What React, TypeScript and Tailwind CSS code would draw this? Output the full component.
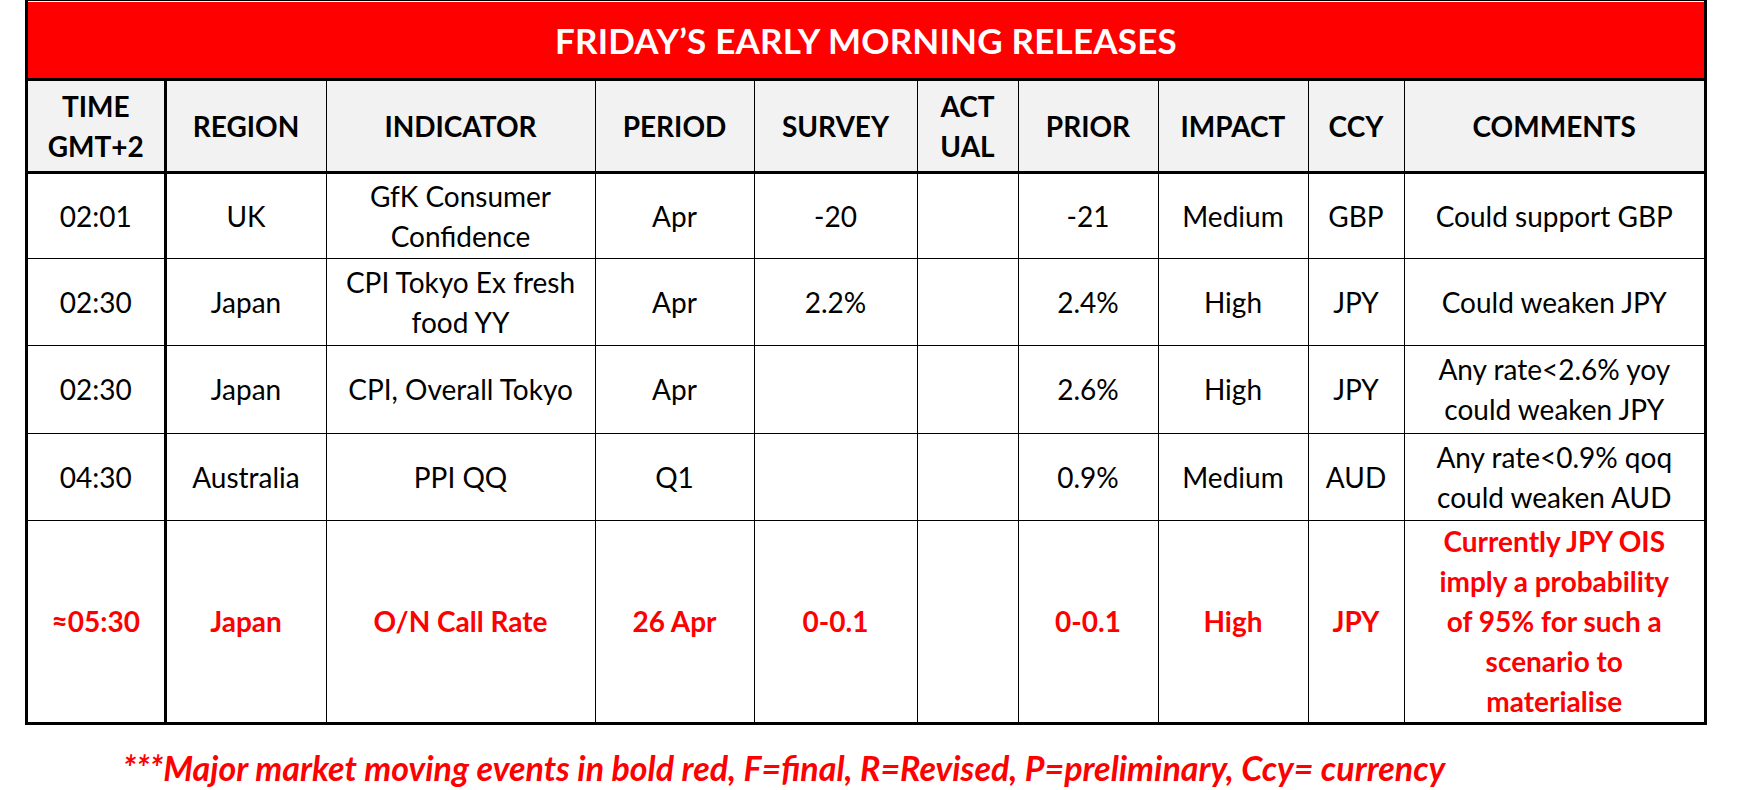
import React from 'react';

interface Release {
  time: string;
  region: string;
  indicator: string[];
  period: string;
  survey: string;
  actual: string;
  prior: string;
  impact: string;
  ccy: string;
  comments: string[];
  major?: boolean;
}

const releases: Release[] = [
  { time: '02:01', region: 'UK', indicator: ['GfK Consumer', 'Confidence'], period: 'Apr', survey: '-20', actual: '', prior: '-21', impact: 'Medium', ccy: 'GBP', comments: ['Could support GBP'] },
  { time: '02:30', region: 'Japan', indicator: ['CPI Tokyo Ex fresh', 'food YY'], period: 'Apr', survey: '2.2%', actual: '', prior: '2.4%', impact: 'High', ccy: 'JPY', comments: ['Could weaken JPY'] },
  { time: '02:30', region: 'Japan', indicator: ['CPI, Overall Tokyo'], period: 'Apr', survey: '', actual: '', prior: '2.6%', impact: 'High', ccy: 'JPY', comments: ['Any rate<2.6% yoy', 'could weaken JPY'] },
  { time: '04:30', region: 'Australia', indicator: ['PPI QQ'], period: 'Q1', survey: '', actual: '', prior: '0.9%', impact: 'Medium', ccy: 'AUD', comments: ['Any rate<0.9% qoq', 'could weaken AUD'] },
  {
    time: '≈05:30', region: 'Japan', indicator: ['O/N Call Rate'], period: '26 Apr', survey: '0-0.1', actual: '', prior: '0-0.1', impact: 'High', ccy: 'JPY',
    comments: ['Currently JPY OIS', 'imply a probability', 'of 95% for such a', 'scenario to', 'materialise'],
    major: true,
  },
];

const rowHeights = ['h-[86px]', 'h-[87px]', 'h-[88px]', 'h-[87px]', 'h-[202px]'];

function Lines({ lines }: { lines: string[] }) {
  return (
    <>
      {lines.map((l, i) => (
        <React.Fragment key={i}>
          {i > 0 && <br />}
          {l}
        </React.Fragment>
      ))}
    </>
  );
}

export default function App() {
  return (
    <div className="w-[1737px] h-[790px] bg-white font-['Lato',sans-serif] text-black overflow-hidden">
      <div className="ml-[25px] w-[1682px] border-x-[3px] border-t border-b-[3px] border-black">
        {/* Title bar */}
        <div className="mt-px h-[79px] bg-[#ff0000] border-b-[3px] border-black flex items-center justify-center">
          <span className="text-white font-bold text-[35px] tracking-[0.2px]">FRIDAY’S EARLY MORNING RELEASES</span>
        </div>

        <table className="w-full table-fixed border-collapse text-center text-[28px] leading-[40px]">
          <colgroup>
            <col className="w-[137px]" />
            <col className="w-[161px]" />
            <col className="w-[269px]" />
            <col className="w-[159px]" />
            <col className="w-[163px]" />
            <col className="w-[101px]" />
            <col className="w-[140px]" />
            <col className="w-[150px]" />
            <col className="w-[96px]" />
            <col className="w-[300px]" />
          </colgroup>
          <thead>
            <tr className="h-[91px] bg-[#f2f2f2] font-bold">
              <th className="border-r-[3px] border-b-[3px] border-black">TIME<br />GMT+2</th>
              <th className="border-r border-b-[3px] border-black">REGION</th>
              <th className="border-r border-b-[3px] border-black">INDICATOR</th>
              <th className="border-r border-b-[3px] border-black">PERIOD</th>
              <th className="border-r border-b-[3px] border-black">SURVEY</th>
              <th className="border-r border-b-[3px] border-black">ACT<br />UAL</th>
              <th className="border-r border-b-[3px] border-black">PRIOR</th>
              <th className="border-r border-b-[3px] border-black">IMPACT</th>
              <th className="border-r border-b-[3px] border-black">CCY</th>
              <th className="border-b-[3px] border-black">COMMENTS</th>
            </tr>
          </thead>
          <tbody>
            {releases.map((r, i) => {
              const last = i === releases.length - 1;
              const cell = `border-r border-black ${last ? '' : 'border-b'}`;
              return (
                <tr key={i} className={`${rowHeights[i]} ${r.major ? 'text-[#ff0000] font-bold' : ''}`}>
                  <td className={`border-r-[3px] border-black ${last ? '' : 'border-b'}`}>{r.time}</td>
                  <td className={cell}>{r.region}</td>
                  <td className={cell}><Lines lines={r.indicator} /></td>
                  <td className={cell}>{r.period}</td>
                  <td className={cell}>{r.survey}</td>
                  <td className={cell}>{r.actual}</td>
                  <td className={cell}>{r.prior}</td>
                  <td className={cell}>{r.impact}</td>
                  <td className={cell}>{r.ccy}</td>
                  <td className={`border-black ${last ? '' : 'border-b'}`}><Lines lines={r.comments} /></td>
                </tr>
              );
            })}
          </tbody>
        </table>
      </div>

      {/* Footnote */}
      <div className="w-[1568px] mt-[23px] text-center text-[#ff0000] font-bold italic text-[34px] leading-[40px]">
        ***Major market moving events in bold red, F=final, R=Revised, P=preliminary, Ccy= currency
      </div>
    </div>
  );
}
